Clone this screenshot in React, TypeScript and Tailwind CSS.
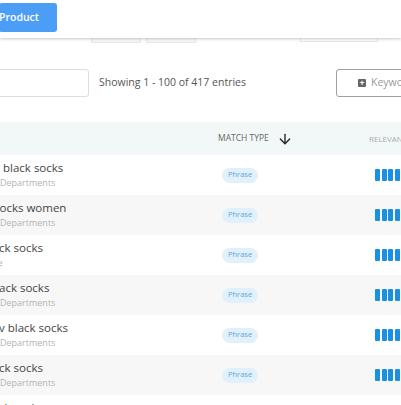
import { ArrowDown } from 'lucide-react';

// visible slices of the keyword column (page is scrolled right)
const rows = [
  { title: '. black socks', sub: 'Departments', off: '-ml-[3px]' },
  { title: 'socks women', sub: 'Departments', off: '-ml-[6px]' },
  { title: 'ck socks', sub: 'Home', off: '-ml-[1px]', subOff: '-ml-[23px]' },
  { title: 'ack socks', sub: 'Departments', off: '-ml-[1px]' },
  { title: 'v black socks', sub: 'Departments', off: '-ml-[1px]' },
  { title: 'ck socks', sub: 'Departments', off: '-ml-[1px]' },
  { title: 'ck socks', sub: 'Departments', off: '-ml-[1px]' },
];

function Bars() {
  return (
    <div className="flex gap-[1.5px] ml-[6px]">
      {[0, 1, 2, 3, 4, 5].map((i) => (
        <div key={i} className="w-[5px] h-[12px] bg-[#1b8fe0] rounded-[1px]" />
      ))}
    </div>
  );
}

export default function App() {
  return (
    <div className="w-[401px] h-[405px] overflow-hidden bg-white font-['Open_Sans',sans-serif] text-[#444]">
      {/* sticky top bar */}
      <div className="relative z-10 h-[38px] bg-white shadow-[0_1px_3px_rgba(0,0,0,0.22)] flex items-start pt-[3px]">
        <button className="h-[29px] pr-[18px] -ml-[1px] bg-[#4b9df6] text-white text-[10.5px] font-semibold rounded-[3px]">
          Product
        </button>
      </div>
      {/* tabs peeking out under the bar */}
      <div className="h-[6px] flex">
        <div className="ml-[91px] w-[50px] h-[5px] border border-t-0 border-[#e6e6e6] bg-[#f8f8f8]" />
        <div className="ml-[5px] w-[50px] h-[5px] border border-t-0 border-[#e6e6e6] bg-[#f8f8f8]" />
        <div className="ml-[104px] w-[78px] h-[4px] border border-t-0 border-[#e6e6e6]" />
      </div>

      {/* toolbar */}
      <div className="mt-[25px] h-[28px] flex items-center">
        <div className="-ml-[20px] w-[109px] h-[28px] border border-[#dedede] rounded-[3px]" />
        <span className="ml-[10px] text-[10.5px] text-[#555]">Showing 1 - 100 of 417 entries</span>
        <button className="ml-auto -mr-[40px] w-[105px] h-[28px] border border-[#a0a0a0] rounded-[3px] flex items-center pl-[21px] gap-[5px] text-[10.5px] text-[#9a9a9a]">
          <span className="w-[8px] h-[8px] bg-[#666] rounded-[1px] flex items-center justify-center text-white text-[8px] leading-none font-bold">+</span>
          Keyword
        </button>
      </div>

      {/* table */}
      <div className="mt-[25px]">
        <div className="h-[33px] bg-[#f2f8f8] grid grid-cols-[218px_151px_1fr] items-center">
          <div />
          <div className="flex items-center text-[8.5px] text-[#666] uppercase">
            <span>Match Type</span>
            <ArrowDown className="ml-[8px] w-[16px] h-[16px] text-[#222]" strokeWidth={2} />
          </div>
          <div className="text-[8px] text-[#aaa] uppercase whitespace-nowrap">Relevance</div>
        </div>
        {rows.map((r, i) => (
          <div
            key={i}
            className={`h-[40px] grid grid-cols-[218px_151px_1fr] items-center ${i % 2 === 1 ? 'bg-[#f7f7f7]' : 'bg-white'}`}
          >
            <div className="flex flex-col whitespace-nowrap -mt-[1px]">
              <span className={`text-[11.5px] leading-[17px] text-[#444] ${r.off}`}>{r.title}</span>
              <span className={`text-[9px] leading-[14px] text-[#b3b3b3] ${r.subOff ?? 'ml-0'}`}>{r.sub}</span>
            </div>
            <div className="flex items-center">
              <span className="ml-[4px] flex items-center h-[15px] px-[6px] rounded-full bg-[#e1f0fb] text-[7.5px] text-[#5aa8de]">
                Phrase
              </span>
            </div>
            <Bars />
          </div>
        ))}
      </div>
    </div>
  );
}
